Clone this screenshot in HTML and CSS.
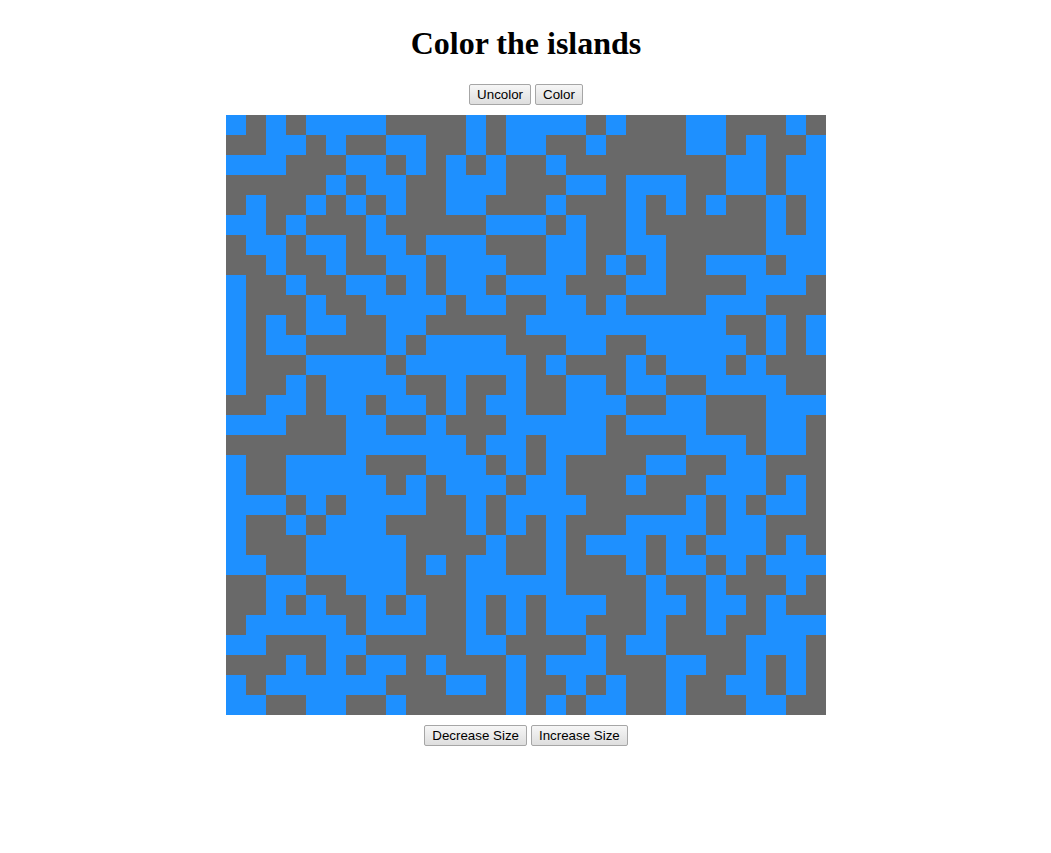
FILE: index.html
```html
<!DOCTYPE html>
<html lang="en">
<head>
<meta charset="utf-8">
<title>Color the islands</title>
<link rel="stylesheet" href="styles.css">
</head>
<body>
<h1 class="title">Color the islands</h1>
<div class="controls">
  <button class="btn" type="button" id="uncolor">Uncolor</button>
  <button class="btn" type="button" id="color">Color</button>
</div>
<div class="grid" id="grid"></div>
<div class="controls">
  <button class="btn" type="button">Decrease Size</button>
  <button class="btn" type="button">Increase Size</button>
</div>
<script src="script.js"></script>
</body>
</html>
```
FILE: styles.css
```css
html, body {
  background: #fff;
}
body {
  margin: 8px 8px 8px 9px;
  font-family: "Liberation Serif", serif;
}
.title {
  margin: 16.56px 0 22.44px;
  text-align: center;
  font-size: 32px;
  font-weight: bold;
  color: #000;
}
.controls {
  margin: 10px 0;
  text-align: center;
  height: 21px;
  line-height: 21px;
}
.btn {
  box-sizing: border-box;
  height: 21px;
  padding: 1px 7px;
  margin: 0;
  vertical-align: top;
  font: 13.333px "Liberation Sans", Arial, sans-serif;
  color: #000;
  background: linear-gradient(#f6f6f6, #dedede);
  border: 1px solid #a6a6a6;
  border-radius: 2px;
}
.grid {
  display: grid;
  grid-template-columns: repeat(30, 20px);
  grid-auto-rows: 20px;
  width: 600px;
  margin: 0 auto;
}
.cell {
  background: #696969;
}
.cell-water {
  background: #1e90ff;
}
```
FILE: script.js
```js
var rows = [
  "101011110000101" + "111010001100010",
  "001101001100101" + "100100001101001",
  "111000110101010" + "010000000011011",
  "000001011001110" + "001101110011011",
  "010010101001100" + "010001010100101",
  "110100010000011" + "101001000000101",
  "011011011011100" + "011001100000111",
  "001001001101110" + "011010100111011",
  "100100110101101" + "110001100001110",
  "100010011110110" + "011010000111000",
  "101011001100000" + "111111111100101",
  "101100001011110" + "001100111110101",
  "100011110111111" + "010001011101000",
  "100101111001001" + "001101100111100",
  "001101101101011" + "001110011000111",
  "111000110010001" + "111101111000110",
  "000000111111011" + "011100001110110",
  "100111100011101" + "010000110011000",
  "100111110101110" + "110001000111010",
  "111010111100101" + "111000001010110",
  "100101110000101" + "010001111011000",
  "100011111000010" + "010111010111010",
  "110011111010110" + "010001011010111",
  "001100111000111" + "110000100100010",
  "001010010100101" + "011100110110100",
  "011111011100101" + "011000100100111",
  "110001100000110" + "000101100001110",
  "000101011010001" + "011100011001010",
  "101111110001101" + "001010010011010",
  "110011001000001" + "010110010001100"
];
var grid = document.getElementById("grid");
rows.forEach(function (row) {
  row.split("").forEach(function (value) {
    var cell = document.createElement("div");
    cell.className = value === "1" ? "cell cell-water" : "cell";
    grid.appendChild(cell);
  });
});
```
